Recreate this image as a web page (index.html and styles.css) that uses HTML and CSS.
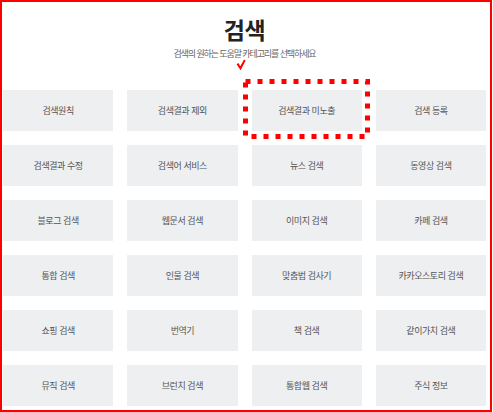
FILE: index.html
```html
<!DOCTYPE html>
<html lang="ko">
<head>
<meta charset="utf-8">
<title>검색</title>
<link rel="stylesheet" href="styles.css">
</head>
<body>
<div class="page">
  <header class="header">
    <h1 class="title">검색</h1>
    <p class="subtitle">검색의 원하는 도움말 카테고리를 선택하세요</p>
  </header>
  <ul class="grid">
    <li class="tile">검색원칙</li>
    <li class="tile">검색결과 제외</li>
    <li class="tile">검색결과 미노출</li>
    <li class="tile">검색 등록</li>
    <li class="tile">검색결과 수정</li>
    <li class="tile">검색어 서비스</li>
    <li class="tile">뉴스 검색</li>
    <li class="tile">동영상 검색</li>
    <li class="tile">블로그 검색</li>
    <li class="tile">웹문서 검색</li>
    <li class="tile">이미지 검색</li>
    <li class="tile">카페 검색</li>
    <li class="tile">통합 검색</li>
    <li class="tile">인물 검색</li>
    <li class="tile">맞춤법 검사기</li>
    <li class="tile">카카오스토리 검색</li>
    <li class="tile">쇼핑 검색</li>
    <li class="tile">번역기</li>
    <li class="tile">책 검색</li>
    <li class="tile">같이가치 검색</li>
    <li class="tile">뮤직 검색</li>
    <li class="tile">브런치 검색</li>
    <li class="tile">통합웹 검색</li>
    <li class="tile">주식 정보</li>
  </ul>
</div>
<div class="frame"></div>
<svg class="check" width="10" height="12" viewBox="0 0 10 12"><polygon points="0.6,5.2 2.4,4 4.3,7.2 8,0.6 9.6,1.5 4.6,11.2" fill="#f00"/></svg>
<svg class="dotted" width="127" height="60" viewBox="0 0 127 60"><rect x="2.5" y="2.5" width="122" height="55" fill="none" stroke="#f00" stroke-width="5" stroke-dasharray="5 7"/></svg>
</body>
</html>
```
FILE: styles.css
```css
* { box-sizing: border-box; }
html, body { margin: 0; padding: 0; background: #fff; }
body {
  width: 493px;
  height: 412px;
  overflow: hidden;
  position: relative;
  font-family: "Noto Sans CJK KR", "Noto Sans", sans-serif;
}
.page {
  width: 483px;
  margin-left: 3px;
}
.header {
  height: 90px;
  display: flex;
  flex-direction: column;
  align-items: center;
  padding-top: 15px;
}
.title {
  margin: 0;
  font-size: 23px;
  line-height: 28px;
  font-weight: 700;
  color: #222;
  letter-spacing: -0.5px;
}
.subtitle {
  margin: 5px 0 0;
  font-size: 9px;
  line-height: 12px;
  color: #666;
  letter-spacing: -1.1px;
}
.grid {
  list-style: none;
  margin: 0;
  padding: 0;
  display: grid;
  grid-template-columns: repeat(4, 1fr);
  grid-auto-rows: 41px;
  column-gap: 14px;
  row-gap: 14px;
}
.tile {
  background: #eeeff1;
  display: flex;
  align-items: center;
  justify-content: center;
  font-size: 9px;
  color: #555;
  letter-spacing: -0.45px;
}
.frame {
  position: absolute;
  left: 0;
  top: 0;
  width: 492px;
  height: 412px;
  border: 2px solid #f00;
  pointer-events: none;
}
.check {
  position: absolute;
  left: 236px;
  top: 59px;
}
.dotted {
  position: absolute;
  left: 243px;
  top: 79px;
}
```
